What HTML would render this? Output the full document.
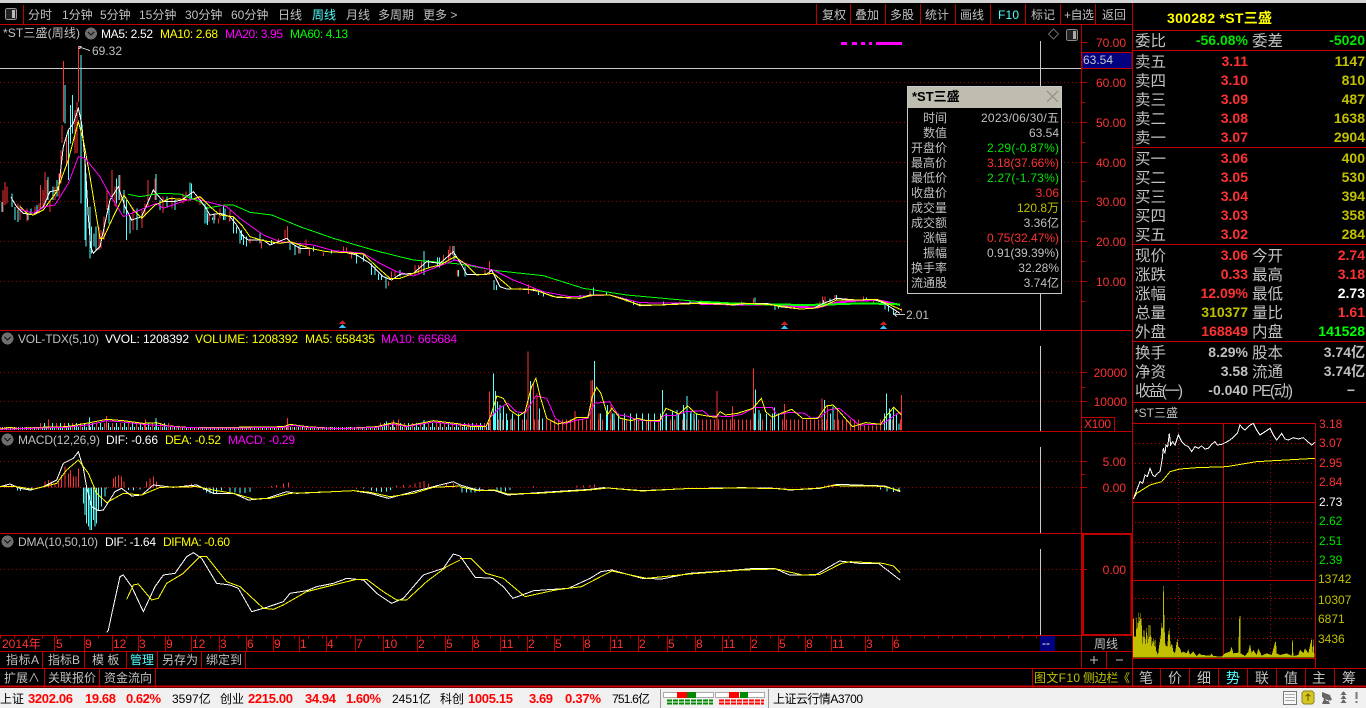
<!DOCTYPE html>
<html lang="zh">
<head>
<meta charset="utf-8">
<title>*ST三盛</title>
<style>
html,body{margin:0;padding:0;background:#000;width:1366px;height:708px;overflow:hidden}
svg{display:block;font-family:"Liberation Sans","WenQuanYi Zen Hei","Noto Sans CJK SC",sans-serif;font-size:12px;shape-rendering:crispEdges}
text{white-space:pre}
.g{fill:#c0c0c0}.w{fill:#fff}.r{fill:#ff3232}.y{fill:#ffff00}.m{fill:#ff00ff}.l{fill:#00ff00}.c{fill:#54ffff}.o{fill:#c0c000}.n{fill:#00e600}.k{fill:#000}.p{fill:#f00}
.e{text-anchor:end}.mid{text-anchor:middle}.b{font-weight:bold;font-size:14px}.s{font-size:15.5px}
.z *{vector-effect:non-scaling-stroke;fill:none}
.ln{stroke:#c00000;stroke-width:1;fill:none}
.dot{stroke:#a00000;stroke-width:1;stroke-dasharray:1 3;fill:none}
.dot2{stroke:#d00000;stroke-width:1;stroke-dasharray:1 3;fill:none}
.sb text{font-size:12px}
.sb .b2{font-weight:bold;font-size:13px;fill:#f00}
</style>
</head>
<body>
<svg width="1366" height="708" viewBox="0 0 1366 708" xmlns="http://www.w3.org/2000/svg">
<rect width="1366" height="708" fill="#000"/>
<rect width="1366" height="3" fill="#d4d4d4"/>

<!-- structural lines -->
<path class="ln" d="M0 24.5H1132M0 330.5H1132M0 431.5H1132M0 533.5H1132M0 635.5H1132M0 651.5H1132M0 668.5H1366M1081.5 25V668M1132.5 3V686M23.5 5V24M816.5 4V24M850.5 4V24M885.5 4V24M920.5 4V24M955.5 4V24M990.5 4V24M1025.5 4V24M1060.5 4V24M1095.5 4V24M1132.5 30.5H1366M1132.5 50.5H1366M1132.5 147.5H1366M1132.5 244.5H1366M1132.5 341.5H1366M1132.5 402.5H1366M1106.5 651V668M1032.5 668V686M42.5 651V668M84.5 651V668M126.5 651V668M157.5 651V668M201.5 651V668M245.5 651V668M44.5 668V686M99.5 668V686M155.5 668V686"/>
<path d="M0 686.5H1366" stroke="#d00000" stroke-width="2" fill="none"/>

<!-- toolbar -->
<rect x="5.5" y="8.5" width="11" height="11" rx="2" fill="#222" stroke="#999"/><rect x="12" y="10" width="3" height="8" fill="#bbb"/>
<g class="g">
<text x="28" y="19">分时</text><text x="62" y="19">1分钟</text><text x="100" y="19">5分钟</text><text x="139" y="19">15分钟</text><text x="185" y="19">30分钟</text><text x="231" y="19">60分钟</text><text x="278" y="19">日线</text><text x="346" y="19">月线</text><text x="378" y="19">多周期</text><text x="423" y="19">更多 &gt;</text>
<text x="822" y="19">复权</text><text x="855" y="19">叠加</text><text x="890" y="19">多股</text><text x="925" y="19">统计</text><text x="960" y="19">画线</text><text x="1031" y="19">标记</text><text x="1064" y="19" textLength="30">+自选</text><text x="1102" y="19">返回</text>
</g>
<text class="c" x="312" y="19">周线</text><text class="c" x="998" y="19" textLength="21">F10</text>

<!-- grid -->
<path class="dot" d="M0 82.5H1081M0 122.5H1081M0 162.5H1081M0 201.5H1081M0 241.5H1081M0 281.5H1081M0 372.5H1081M0 401.5H1081M0 461.5H1081M0 487.5H1081M0 569.5H1081"/>

<!-- axis ticks -->
<path class="ln" d="M1082 42.5H1087M1082 62.5H1085M1082 82.5H1087M1082 102.5H1085M1082 122.5H1087M1082 142.5H1085M1082 162.5H1087M1082 181.5H1085M1082 201.5H1087M1082 221.5H1085M1082 241.5H1087M1082 261.5H1085M1082 281.5H1087M1082 301.5H1085M1082 372.5H1087M1082 387.5H1085M1082 401.5H1087M1082 461.5H1087M1082 474.5H1085M1082 487.5H1087M1082 569.5H1087"/>
<g class="r e">
<text class="e r" x="1126" y="47">70.00</text><text class="e r" x="1126" y="87">60.00</text><text class="e r" x="1126" y="127">50.00</text><text class="e r" x="1126" y="167">40.00</text><text class="e r" x="1126" y="206">30.00</text><text class="e r" x="1126" y="246">20.00</text><text class="e r" x="1126" y="286">10.00</text>
<text class="e r" x="1127" y="377">20000</text><text class="e r" x="1127" y="406">10000</text>
<text class="e r" x="1126" y="466">5.00</text><text class="e r" x="1126" y="492">0.00</text><text class="e r" x="1126" y="574">0.00</text>
</g>
<rect x="1081.5" y="417.5" width="33" height="14" fill="#000" stroke="#c00000"/>
<text class="r" x="1084" y="428" textLength="27">X100</text>
<rect x="1083" y="534" width="48.5" height="101" fill="none" stroke="#c00000" stroke-width="2"/>

<!-- crosshair -->
<path d="M0 68.5H1081M1040.5 41V330M1040.5 346V431M1040.5 447V533M1040.5 549V635" stroke="#c8c8c8" fill="none"/>
<rect x="1082" y="52.5" width="50" height="16" fill="#000080" stroke="#c00000"/>
<text x="1083" y="64" fill="#c8c8c8" textLength="30">63.54</text>

<!-- legends -->
<text class="g" x="3" y="37" textLength="77">*ST三盛(周线)</text>
<circle cx="91" cy="33.5" r="6" fill="#6e6e6e"/><path d="M88 32l3 3 3-3" stroke="#111" stroke-width="1.3" fill="none"/>
<text class="w" x="101" y="38" textLength="52">MA5: 2.52</text><text class="y" x="160" y="38" textLength="58">MA10: 2.68</text><text class="m" x="225" y="38" textLength="58">MA20: 3.95</text><text class="l" x="290" y="38" textLength="58">MA60: 4.13</text>
<circle cx="7.5" cy="338.5" r="6" fill="#6e6e6e"/><path d="M4.5 337l3 3 3-3" stroke="#111" stroke-width="1.3" fill="none"/>
<text class="g" x="18" y="343" textLength="81">VOL-TDX(5,10)</text><text class="w" x="105" y="343" textLength="84">VVOL: 1208392</text><text class="y" x="195" y="343" textLength="103">VOLUME: 1208392</text><text class="y" x="305" y="343" textLength="70">MA5: 658435</text><text class="m" x="381" y="343" textLength="76">MA10: 665684</text>
<circle cx="7.5" cy="439.5" r="6" fill="#6e6e6e"/><path d="M4.5 438l3 3 3-3" stroke="#111" stroke-width="1.3" fill="none"/>
<text class="g" x="18" y="444" textLength="82">MACD(12,26,9)</text><text class="w" x="106" y="444" textLength="52">DIF: -0.66</text><text class="y" x="165" y="444" textLength="56">DEA: -0.52</text><text class="m" x="228" y="444" textLength="67">MACD: -0.29</text>
<circle cx="7.5" cy="541.5" r="6" fill="#6e6e6e"/><path d="M4.5 540l3 3 3-3" stroke="#111" stroke-width="1.3" fill="none"/>
<text class="g" x="18" y="546" textLength="80">DMA(10,50,10)</text><text class="w" x="105" y="546" textLength="51">DIF: -1.64</text><text class="y" x="163" y="546" textLength="67">DIFMA: -0.60</text>

<!-- top right chart decorations -->
<path d="M841 42h6v3h-6zM852 42h5v3h-5zM861 42h4v3h-4zM869 42h3v3h-3zM876 42h26v3h-26z" fill="#ff00ff"/>
<path d="M1053.5 29l5 5-5 5-5-5z" stroke="#666" fill="none"/>
<rect x="1066.5" y="29.5" width="11" height="11" rx="2" fill="#222" stroke="#888"/><rect x="1073" y="31" width="3" height="8" fill="#aaa"/>

<!-- price chart: zoom1 coords -->
<g class="z" transform="translate(0,0) scale(.33333)">
<path stroke="#ff3232" stroke-width="1" d="M15 546V615M9 570V636M21 560V610M54 610V645M60 615V660M81 625V665M105 620V645M117 610V640M122 555V624M129 570V621M135 516V615M141 540V600M150 600V636M165 560V600M177 520V590M183 450V550M186 375V429M190 183V366M200 410V500M225 330V460M235 140V306M231 306V459M297 680V750M303 690V745M312 650V720M321 570V630M336 510V591M345 560V620M360 525V600M399 621V690M426 630V684M435 610V650M444 540V621M465 535V600M489 590V639M516 590V625M549 580V610M558 575V605M600 590V615M660 625V650M690 630V665"/>
<path stroke="#54ffff" stroke-width="1" d="M6 606V636M36 580V621M45 621V660M54 630V666M84 640V660M93 625V645M111 615V640M144 531V600M159 560V600M171 540V590M195 255V370M205 390V540M212 315V430M218 285V400M243 165V610M255 480V720M258 520V740M270 620V775M275 680V760M282 700V740M288 680V750M327 610V670M349 535V610M357 525V600M372 570V640M380 600V720M390 650V700M411 625V690M468 522V600M480 600V630M501 590V620M525 600V630M570 548V600M575 550V600M621 620V670M642 640V670M670 620V660M700 650V700M725 690V720"/>
<polyline stroke="#fff" points="33,592 50,620 70,640 100,645 130,620 150,575 175,570 190,440 205,390 220,370 235,325 245,370 255,480 265,650 272,740 280,760 300,740 330,600 355,560 375,620 395,660 425,650 460,570 490,605 520,605 545,600 580,575 600,600"/>
<polyline stroke="#ffff00" points="60,620 80,640 100,645 130,630 170,575 205,480 235,365 250,420 270,530 300,715 310,715 340,650 372,585 400,630 425,655 465,615 510,595 570,600 600,590"/>
<polyline stroke="#ff00ff" points="60,628 100,640 135,620 165,615 205,550 235,470 255,475 300,530 330,585 370,650 420,630 470,610 490,625 560,600 600,597"/>
<polyline stroke="#00ff00" points="385,583 420,590 480,580 540,582 600,605"/>
<path stroke="#c8c8c8" d="M235 140L270 152M235 140H245M235 146H242"/>
</g>
<text fill="#c0c0c0" x="92" y="55" textLength="30">69.32</text>

<!-- price chart: zoom10 coords -->
<g class="z" transform="translate(200,180) scale(.33333)">
<path stroke="#ff3232" d="M27 100V125M45 105V120M55 115V130M60 85V115M88 110V125M150 175V190M185 180V205M235 175V190M255 150V180M262 138V180M295 200V220M318 178V200M328 205V228M370 218V228M430 200V215M440 203V215M455 215V235M565 305V318M575 275V295M585 275V290M645 255V285M655 255V280M665 245V280M730 225V250M745 210V245M750 198V240M758 198V225M772 270V290M855 270V285M868 243V285M985 313V342M1170 335V350M1440 365V372M960 322V332M1000 322V335M1105 350V356"/>
<path stroke="#54ffff" d="M15 70V130M22 100V135M38 112V120M75 85V120M100 125V160M110 140V160M120 155V190M130 165V195M140 170V200M180 160V190M215 180V195M270 185V210M285 195V225M300 195V220M340 200V215M395 210V220M470 220V250M490 225V245M515 250V285M525 260V285M535 280V300M545 285V300M558 290V325M600 270V290M672 213V285M685 240V265M712 232V260M718 232V262M762 198V240M775 270V290M795 260V290M882 300V330M890 315V330M1015 330V345M1030 340V350M1180 322V345M1220 335V345M1280 355V365M1300 365V375M1320 370V380M1140 345V355M1390 365V372M1470 362V370"/>
<polyline stroke="#00ff00" points="0,65 20,85 45,80 75,75 100,75 150,97 215,105 300,140 400,175 530,213 640,240 780,252 890,272 1030,287 1150,325 1280,345 1500,365" stroke-width="1"/>
<polyline stroke="#ff00ff" points="0,60 80,80 120,115 190,165 240,185 340,195 400,212 490,220 540,250 590,275 640,288 700,265 765,240 810,255 880,270 940,300 1030,335 1110,350 1230,345 1320,368 1500,370"/>
<polyline stroke="#fff" points="0,60 15,80 30,105 60,100 90,110 110,135 130,170 145,180 190,180 210,195 260,175 275,190 300,205 330,205 380,215 440,218 470,225 510,250 550,290 575,300 600,283 640,280 680,245 720,250 760,215 785,255 800,283 860,283 875,270 900,320 920,327 985,328 1020,335 1070,352 1140,355 1170,345 1230,345 1280,360 1320,377 1375,375 1500,368"/>
<polyline stroke="#ffff00" points="0,50 30,80 60,105 100,110 125,135 150,170 190,182 240,190 270,185 330,205 380,215 440,218 490,222 530,260 570,295 600,295 640,280 690,262 720,255 765,230 800,255 830,285 880,280 935,327 1000,328 1060,350 1140,355 1180,345 1230,345 1320,375 1380,375 1500,370"/>
</g>
<!-- markers -->
<path fill="#d02020" d="M342.5 320l3.5 4h-7z"/><path fill="#3cc0ff" d="M342.5 324l3.5 4h-7z"/>
<path fill="#d02020" d="M784.5 321l3.5 4h-7z"/><path fill="#3cc0ff" d="M784.5 325l3.5 4h-7z"/>
<path fill="#d02020" d="M883.5 321l3.5 4h-7z"/><path fill="#3cc0ff" d="M883.5 325l3.5 4h-7z"/>

<!-- price chart: zoom11 coords -->
<g class="z" transform="translate(700,260) scale(.33333)">
<path stroke="#ff3232" d="M30 125V133M125 125V133M160 115V130M360 125V140M368 110V135M375 110V130M405 105V118M490 110V120M520 120V130M605 145V155"/>
<path stroke="#54ffff" d="M165 113V128M225 135V150M235 135V145M370 120V135M390 115V130M410 105V118M500 112V120M545 125V135M555 135V148M565 140V155M580 145V165"/>
<polyline stroke="#ff00ff" stroke-width="2" points="0,132 100,133 230,133 290,140 350,143 410,128 470,122 530,120 565,127 600,135"/>
<polyline stroke="#00ff00" stroke-width="2" points="0,125 90,130 200,133 315,135 400,133 490,130 600,133"/>
<polyline stroke="#fff" points="0,130 50,130 100,135 140,130 200,130 240,140 300,147 340,145 370,130 410,115 470,120 520,118 550,128 600,160"/>
<polyline stroke="#ffff00" points="0,128 50,132 100,133 140,130 200,133 240,138 300,147 340,145 370,138 410,120 470,120 530,118 560,130 605,150"/>
<path stroke="#c8c8c8" d="M582 163H615M582 163L590 156M582 163L590 170"/>
</g>
<text fill="#c0c0c0" x="906" y="319" textLength="23">2.01</text>

<!-- popup -->
<rect x="907.5" y="86.5" width="154" height="207" fill="#000" stroke="#c8c8c8"/>
<rect x="908" y="87" width="153" height="21" fill="#bfbcb0"/>
<text x="912" y="101" font-weight="bold" font-size="13" fill="#000">*ST三盛</text>
<path d="M1047 91l11 11M1058 91l-11 11" stroke="#8c8c84" fill="none"/>
<g>
<text class="g e" x="947" y="122">时间</text><text class="g e" x="947" y="137">数值</text><text class="g e" x="947" y="152">开盘价</text><text class="g e" x="947" y="167">最高价</text><text class="g e" x="947" y="182">最低价</text><text class="g e" x="947" y="197">收盘价</text><text class="g e" x="947" y="212">成交量</text><text class="g e" x="947" y="227">成交额</text><text class="g e" x="947" y="242">涨幅</text><text class="g e" x="947" y="257">振幅</text><text class="g e" x="947" y="272">换手率</text><text class="g e" x="947" y="287">流通股</text>
<text class="g" x="981" y="122" textLength="78">2023/06/30/五</text><text class="g e" x="1059" y="137">63.54</text>
<text class="n" x="987" y="152" textLength="72">2.29(-0.87%)</text><text class="r" x="987" y="167" textLength="72">3.18(37.66%)</text><text class="n" x="987" y="182" textLength="72">2.27(-1.73%)</text>
<text class="r e" x="1059" y="197">3.06</text><text class="o e" x="1059" y="212">120.8万</text><text class="g e" x="1059" y="227">3.36亿</text>
<text class="r" x="987" y="242" textLength="72">0.75(32.47%)</text><text class="g" x="987" y="257" textLength="72">0.91(39.39%)</text><text class="g e" x="1059" y="272">32.28%</text><text class="g e" x="1059" y="287">3.74亿</text>
</g>

<!-- volume -->
<path stroke="#ff3232" stroke-width="3" stroke-dasharray="1 3" fill="none" d="M0 428.5H490"/>
<path stroke="#54ffff" stroke-width="3" stroke-dasharray="1 3" stroke-dashoffset="2" fill="none" d="M0 428.5H490"/>
<path stroke="#ff3232" stroke-width="7" stroke-dasharray="1 7" fill="none" d="M40 426.5H170M380 426.5H490"/>
<path stroke="#54ffff" stroke-width="7" stroke-dasharray="1 7" stroke-dashoffset="4" fill="none" d="M40 426.5H170M380 426.5H490"/>
<path stroke="#ff3232" stroke-width="11" stroke-dasharray="1 3" fill="none" d="M490 425H860M880 425H902"/>
<path stroke="#54ffff" stroke-width="17" stroke-dasharray="1 5" stroke-dashoffset="2" fill="none" d="M490 422H530M590 422H700M750 422H780M820 422H835M880 422H902"/>
<path stroke="#ff3232" stroke-width="5" stroke-dasharray="1 3" fill="none" d="M860 428H880"/>
<g class="z" transform="translate(0,330) scale(.33333)">
<path stroke="#ff3232" d="M320 258V300M145 268V300M437 268V300M862 264V300M1180 270V300M1196 268V300M1320 272V300"/>
<path stroke="#54ffff" d="M268 262V300M468 264V300M1160 275V300M1272 270V300"/>
<polyline stroke="#ffff00" points="0,297 30,292 55,296 120,292 200,290 270,278 320,268 370,272 430,280 470,278 500,287 560,292 700,292 850,290 870,283 920,290 1020,296 1130,290 1180,278 1220,288 1300,272 1380,282"/>
<polyline stroke="#ff00ff" points="0,298 60,296 120,294 200,292 270,284 320,272 370,276 430,283 500,288 560,293 700,294 850,292 880,286 920,292 1020,296 1130,292 1180,282 1220,290 1300,276 1380,286"/>
</g>
<g class="z" transform="translate(460,330) scale(.43365,.33333)">
<path stroke="#ff3232" d="M68 185V300M157 65V300M170 160V300M177 190V300M265 243V300M302 152V300M306 150V300M320 250V300M348 225V300M593 183V300M628 228V300M677 115V300M748 222V300M835 205V300M848 225V300M870 235V300M1018 195V300"/>
<path stroke="#54ffff" d="M77 130V300M82 183V300M87 215V300M92 225V300M100 230V300M110 270V300M120 265V300M135 258V300M163 153V300M183 235V300M190 265V300M310 93V300M340 225V300M355 250V300M467 180V300M475 250V300M490 245V300M500 240V300M515 225V300M523 198V300M533 245V300M540 250V300M682 178V300M690 240V300M725 232V300M840 210V300M860 230V300M983 190V300M990 235V300M1000 235V300M1012 280V300"/>
<polyline stroke="#ff00ff" points="0,283 60,288 70,262 90,235 110,220 130,245 150,250 175,198 200,205 220,265 240,282 270,270 295,265 310,220 345,215 365,255 385,258 410,270 460,275 470,257 495,257 520,245 560,242 575,258 590,258 620,260 650,253 680,232 720,232 730,255 760,247 795,250 810,265 830,262 850,240 875,235 920,285 975,282 1000,258 1018,245"/>
<polyline stroke="#ffff00" points="0,285 30,290 60,290 70,260 85,198 100,205 115,240 135,258 150,245 165,170 175,145 185,200 200,265 225,282 250,275 270,262 295,262 305,200 315,172 325,190 340,255 350,235 370,265 395,272 410,265 430,272 460,272 475,235 490,243 505,252 525,228 545,252 570,258 590,262 600,245 612,255 640,250 675,235 695,205 705,245 720,262 740,250 765,238 790,265 825,265 845,228 860,225 875,245 905,290 935,278 970,283 985,255 1000,232 1018,255"/>
</g>

<!-- macd -->
<g class="z" transform="translate(0,330) scale(.33333)">
<path stroke="#ff3232" d="M135 472V455M145 472V450M155 472V455M165 472V460M175 472V455M185 472V435M195 472V410M205 472V430M212 472V420M220 472V440M228 472V440M235 472V415M340 472V445M347 472V440M355 472V435M365 472V440M372 472V455M440 472V455M450 472V445M460 472V440M470 472V455M480 472V465M560 472V465M575 472V460M815 472V468M830 472V465M850 472V460M865 472V458M1190 472V466M1210 472V465M1230 472V465M1245 472V460M1260 472V456M1272 472V453M1285 472V460M1310 472V465M1340 472V462M1360 472V460M20 472V464M35 472V464"/>
<path stroke="#54ffff" d="M52 472V482M62 472V483M85 472V481M95 472V482M250 472V520M255 472V555M260 472V580M265 472V590M270 472V600M275 472V600M280 472V570M285 472V590M290 472V580M295 472V540M305 472V530M315 472V500M320 472V475M385 472V480M400 472V482M420 472V478M610 472V480M620 472V488M630 472V491M640 472V492M650 472V490M665 472V482M690 472V486M705 472V488M720 472V490M735 472V489M750 472V486M1070 472V476M1090 472V476M1115 472V482M1130 472V485M1145 472V486M1160 472V485M1172 472V480"/>
<path class="dot" style="stroke:#c00000" d="M0 472H1380"/>
<polyline stroke="#fff" points="0,470 30,462 60,475 90,480 130,470 170,450 190,400 220,385 235,365 250,415 260,472 275,530 295,542 310,540 345,485 365,475 395,498 425,495 460,465 520,472 590,465 640,490 700,490 745,510 800,505 860,485 890,490 1000,485 1060,482 1110,490 1165,505 1240,485 1300,470 1360,455 1380,465"/>
<polyline stroke="#ffff00" points="0,470 50,470 100,478 170,460 200,420 235,390 265,430 290,490 320,518 370,490 425,495 480,472 590,470 650,482 700,490 760,507 810,505 870,490 1000,485 1060,482 1110,487 1170,500 1240,490 1300,472 1380,468"/>
</g>
<g class="z" transform="translate(460,330) scale(.43365,.33333)">
<path stroke="#54ffff" d="M5 472V488M15 472V488M25 472V488M35 472V488M45 472V485M85 472V486M95 472V487M105 472V484M115 472V480M970 472V478M985 472V484M1000 472V486M1012 472V484"/>
<path stroke="#ff3232" d="M170 472V468M270 472V467M285 472V466M300 472V465M310 472V464M840 472V466M850 472V464M860 472V464"/>
<polyline stroke="#fff" points="0,465 40,480 80,482 110,495 180,488 300,478 330,473 420,482 520,476 650,473 730,475 760,480 830,475 870,463 980,468 1015,485"/>
<polyline stroke="#ffff00" points="0,470 40,482 80,480 110,492 180,490 300,480 340,474 420,483 520,476 660,474 730,476 770,479 830,474 860,467 975,469 1015,482"/>
</g>

<!-- dma -->
<g class="z" transform="translate(0,330) scale(.33333)">
<polyline stroke="#fff" points="320,908 325,900 340,830 360,740 370,735 395,770 430,845 465,770 490,735 525,730 560,680 580,668 605,685 650,760 690,765 715,775 755,845 800,832 850,815 870,790 920,782 950,770 1000,760 1040,745 1090,750 1130,790 1175,820 1210,805 1270,735 1330,715 1360,672 1380,678"/>
<polyline stroke="#ffff00" points="380,808 400,765 415,762 455,810 475,805 500,760 550,730 600,680 620,680 680,755 720,770 790,835 820,838 850,825 920,785 1000,765 1070,748 1100,748 1150,785 1190,810 1220,810 1280,755 1340,710 1380,690"/>
</g>
<g class="z" transform="translate(460,330) scale(.43365,.33333)">
<polyline stroke="#fff" points="0,678 35,742 75,745 100,770 122,805 170,782 250,775 300,745 325,725 350,720 420,745 465,747 530,730 620,722 680,715 725,715 760,735 820,735 850,712 875,693 920,700 965,700 1015,750"/>
<polyline stroke="#ffff00" points="0,685 25,685 60,730 100,745 150,800 220,780 280,770 350,723 430,745 530,732 650,720 730,717 790,735 830,733 880,700 900,695 975,700 1000,708 1015,728"/>
</g>

<!-- date axis -->
<path stroke="#c00000" stroke-width="3" stroke-dasharray="1 13" fill="none" d="M0 637H1040"/>
<path class="ln" d="M54.5 635V651M84.5 635V651M112.5 635V651M138.5 635V651M165.5 635V651M191.5 635V651M219.5 635V651M246.5 635V651M273.5 635V651M299.5 635V651M326.5 635V651M355.5 635V651M383.5 635V651M417.5 635V651M445.5 635V651M472.5 635V651M500.5 635V651M527.5 635V651M554.5 635V651M583.5 635V651M610.5 635V651M638.5 635V651M667.5 635V651M695.5 635V651M722.5 635V651M750.5 635V651M778.5 635V651M805.5 635V651M831.5 635V651M865.5 635V651M892.5 635V651"/>
<g class="r">
<text class="r" x="2" y="648">2014年</text><text class="r" x="56" y="648">5</text><text class="r" x="85" y="648">9</text><text class="r" x="113" y="648">12</text><text class="r" x="139" y="648">3</text><text class="r" x="166" y="648">9</text><text class="r" x="192" y="648">12</text><text class="r" x="220" y="648">3</text><text class="r" x="247" y="648">6</text><text class="r" x="274" y="648">9</text><text class="r" x="300" y="648">1</text><text class="r" x="327" y="648">4</text><text class="r" x="356" y="648">7</text><text class="r" x="384" y="648">10</text><text class="r" x="418" y="648">2</text><text class="r" x="446" y="648">5</text><text class="r" x="473" y="648">8</text><text class="r" x="501" y="648">11</text><text class="r" x="528" y="648">2</text><text class="r" x="555" y="648">5</text><text class="r" x="584" y="648">8</text><text class="r" x="611" y="648">11</text><text class="r" x="639" y="648">2</text><text class="r" x="668" y="648">5</text><text class="r" x="696" y="648">8</text><text class="r" x="723" y="648">11</text><text class="r" x="751" y="648">2</text><text class="r" x="779" y="648">5</text><text class="r" x="806" y="648">8</text><text class="r" x="832" y="648">11</text><text class="r" x="866" y="648">3</text><text class="r" x="893" y="648">6</text>
</g>
<rect x="1040" y="636" width="15" height="15" fill="#000080"/><text class="w" x="1042" y="647">--</text>
<text class="g" x="1094" y="648">周线</text>
<path d="M1090 660h8M1094 656v8M1116 660h7" stroke="#c0c0c0" fill="none"/>

<!-- lower tabs -->
<g>
<text class="g" x="6" y="664" textLength="33">指标A</text><text class="g" x="48" y="664" textLength="32">指标B</text><text class="g" x="92" y="664">模 板</text><text class="c" x="130" y="664">管理</text><text class="g" x="162" y="664">另存为</text><text class="g" x="206" y="664">绑定到</text>
<text class="g" x="4" y="682" textLength="36">扩展∧</text><text class="g" x="48" y="682">关联报价</text><text class="g" x="104" y="682">资金流向</text>
<text class="o" x="1034" y="682" textLength="46">图文F10</text><text class="o" x="1083" y="682" textLength="47">侧边栏《</text>
</g>

<!-- right panel -->
<text x="1167" y="23" font-weight="bold" font-size="14" fill="#ffff00" textLength="105">300282 *ST三盛</text>
<g class="s">
<text class="g s" x="1135" y="46">委比</text><text class="g s" x="1252" y="46">委差</text>
<text class="g s" x="1135" y="67">卖五</text><text class="g s" x="1135" y="86">卖四</text><text class="g s" x="1135" y="105">卖三</text><text class="g s" x="1135" y="124">卖二</text><text class="g s" x="1135" y="143">卖一</text>
<text class="g s" x="1135" y="164">买一</text><text class="g s" x="1135" y="183">买二</text><text class="g s" x="1135" y="202">买三</text><text class="g s" x="1135" y="221">买四</text><text class="g s" x="1135" y="240">买五</text>
<text class="g s" x="1135" y="261">现价</text><text class="g s" x="1252" y="261">今开</text><text class="g s" x="1135" y="280">涨跌</text><text class="g s" x="1252" y="280">最高</text><text class="g s" x="1135" y="299">涨幅</text><text class="g s" x="1252" y="299">最低</text><text class="g s" x="1135" y="318">总量</text><text class="g s" x="1252" y="318">量比</text><text class="g s" x="1135" y="337">外盘</text><text class="g s" x="1252" y="337">内盘</text>
<text class="g s" x="1135" y="358">换手</text><text class="g s" x="1252" y="358">股本</text><text class="g s" x="1135" y="377">净资</text><text class="g s" x="1252" y="377">流通</text><text class="g s" x="1135" y="396" textLength="48">收益(一)</text><text class="g s" x="1252" y="396" textLength="41">PE(动)</text>
</g>
<g>
<text class="n b e" x="1248" y="45">-56.08%</text><text class="n b e" x="1365" y="45">-5020</text>
<text class="r b e" x="1248" y="66">3.11</text><text class="r b e" x="1248" y="85">3.10</text><text class="r b e" x="1248" y="104">3.09</text><text class="r b e" x="1248" y="123">3.08</text><text class="r b e" x="1248" y="142">3.07</text>
<text class="r b e" x="1248" y="163">3.06</text><text class="r b e" x="1248" y="182">3.05</text><text class="r b e" x="1248" y="201">3.04</text><text class="r b e" x="1248" y="220">3.03</text><text class="r b e" x="1248" y="239">3.02</text>
<text class="o b e" x="1365" y="66">1147</text><text class="o b e" x="1365" y="85">810</text><text class="o b e" x="1365" y="104">487</text><text class="o b e" x="1365" y="123">1638</text><text class="o b e" x="1365" y="142">2904</text>
<text class="o b e" x="1365" y="163">400</text><text class="o b e" x="1365" y="182">530</text><text class="o b e" x="1365" y="201">394</text><text class="o b e" x="1365" y="220">358</text><text class="o b e" x="1365" y="239">284</text>
<text class="r b e" x="1248" y="260">3.06</text><text class="r b e" x="1365" y="260">2.74</text><text class="r b e" x="1248" y="279">0.33</text><text class="r b e" x="1365" y="279">3.18</text><text class="r b e" x="1248" y="298">12.09%</text><text class="w b e" x="1365" y="298">2.73</text><text class="o b e" x="1248" y="317">310377</text><text class="r b e" x="1365" y="317">1.61</text><text class="r b e" x="1248" y="336">168849</text><text class="l b e" x="1365" y="336">141528</text>
<text class="g b e" x="1248" y="357">8.29%</text><text class="g b e" x="1365" y="357">3.74亿</text><text class="g b e" x="1248" y="376">3.58</text><text class="g b e" x="1365" y="376">3.74亿</text><text class="g b e" x="1248" y="395">-0.040</text><text class="g b e" x="1355" y="395">−</text>
</g>
<text class="g" x="1134" y="417" textLength="44">*ST三盛</text>

<!-- intraday -->
<path d="M1132.5 423.5H1315.5M1132.5 502.5H1315.5M1132.5 580.5H1315.5M1132.5 658.5H1315.5M1223.5 423V658M1315.5 423V668" stroke="#c80000" fill="none"/>
<path class="dot2" d="M1135 443.5H1315M1135 463.5H1315M1135 482.5H1315M1135 522.5H1315M1135 542.5H1315M1135 561.5H1315M1135 598.5H1315M1135 618.5H1315M1135 638.5H1315M1178.5 424V658M1270.5 424V658"/>
<g class="z" transform="translate(1130,490) scale(.33333)">
<polygon style="fill:#c0c000" points="9,503 9,385 12,385 12,440 18,440 20,380 24,420 26,365 30,400 32,365 35,400 38,465 42,410 46,465 50,410 54,470 57,385 60,460 62,400 65,470 70,445 73,470 75,440 78,480 84,495 87,470 92,440 95,395 98,430 100,288 102,288 103,400 106,465 112,470 115,430 118,415 122,470 126,460 130,485 135,490 142,445 145,470 150,475 155,490 160,485 170,490 175,478 180,495 190,485 200,498 208,490 215,495 240,497 245,490 250,498 275,500 285,490 300,485 305,470 310,490 325,488 328,378 331,378 332,490 345,498 355,485 360,462 365,490 370,480 380,495 385,475 395,497 410,490 425,495 436,455 438,455 440,490 450,495 470,490 485,498 487,450 489,450 490,498 505,495 510,480 520,490 525,475 535,490 545,445 548,490 552,440 553,503"/>
</g>
<g class="z" transform="translate(1130,245) scale(.33333)">
<polyline stroke="#ffff00" stroke-width="1" points="10,762 20,745 60,720 95,710 120,680 150,672 200,668 290,665 380,650 555,640"/>
<polyline stroke="#fff" points="10,762 30,710 38,715 45,690 52,695 60,670 68,690 75,695 82,685 90,680 97,640 100,610 105,625 108,600 113,605 118,565 122,600 128,590 135,600 145,570 155,590 165,600 175,605 185,620 195,605 205,610 215,603 225,612 235,610 245,598 255,590 262,600 275,598 288,592 300,585 312,575 322,565 330,540 338,550 345,555 358,542 370,535 380,555 390,570 405,560 420,550 430,570 440,585 448,575 455,565 465,582 475,585 490,578 505,582 520,578 533,590 545,600 555,592"/>
</g>
<g>
<text class="r" x="1319" y="428">3.18</text><text class="r" x="1319" y="447">3.07</text><text class="r" x="1319" y="467">2.95</text><text class="r" x="1319" y="486">2.84</text><text class="w" x="1319" y="506">2.73</text><text class="n" x="1319" y="525">2.62</text><text class="n" x="1319" y="545">2.51</text><text class="n" x="1319" y="564">2.39</text>
<text class="o" x="1318" y="583">13742</text><text class="o" x="1318" y="604">10307</text><text class="o" x="1318" y="623">6871</text><text class="o" x="1318" y="643">3436</text>
</g>

<!-- right tabs -->
<path class="ln" d="M1160.5 668V686M1189.5 668V686M1218.5 668V686M1247.5 668V686M1276.5 668V686M1305.5 668V686M1334.5 668V686"/>
<g font-size="14">
<text class="g mid" x="1146" y="683" font-size="14">笔</text><text class="g mid" x="1175" y="683" font-size="14">价</text><text class="g mid" x="1204" y="683" font-size="14">细</text><text class="c mid" x="1233" y="683" font-size="14">势</text><text class="g mid" x="1262" y="683" font-size="14">联</text><text class="g mid" x="1291" y="683" font-size="14">值</text><text class="g mid" x="1319" y="683" font-size="14">主</text><text class="g mid" x="1349" y="683" font-size="14">筹</text>
</g>

<!-- status bar -->
<rect y="688" width="1366" height="20" fill="#f0f0f0"/>
<g class="sb">
<text class="k" x="0" y="703">上证</text><text class="b2" x="28" y="703" textLength="45">3202.06</text><text class="b2" x="85" y="703" textLength="31">19.68</text><text class="b2" x="126" y="703" textLength="35">0.62%</text><text class="k" x="172" y="703">3597亿</text>
<text class="k" x="220" y="703">创业</text><text class="b2" x="248" y="703" textLength="45">2215.00</text><text class="b2" x="305" y="703" textLength="31">34.94</text><text class="b2" x="346" y="703" textLength="35">1.60%</text><text class="k" x="392" y="703">2451亿</text>
<text class="k" x="440" y="703">科创</text><text class="b2" x="468" y="703" textLength="45">1005.15</text><text class="b2" x="529" y="703" textLength="24">3.69</text><text class="b2" x="565" y="703" textLength="36">0.37%</text><text class="k" x="612" y="703" textLength="38">751.6亿</text>
<text class="k" x="773" y="703" textLength="90">上证云行情A3700</text>
</g>
<path d="M660.5 689V708M768.5 689V708" stroke="#999" fill="none"/>
<rect x="663.5" y="692.5" width="50" height="5" fill="#fff" stroke="#aaa"/><rect x="677" y="692" width="10" height="6" fill="#f00"/><rect x="687" y="692" width="9" height="6" fill="#080"/>
<rect x="715.5" y="692.5" width="49" height="5" fill="#fff" stroke="#aaa"/><rect x="729" y="692" width="10" height="6" fill="#f00"/><rect x="740" y="692" width="8" height="6" fill="#080"/>
<path d="M667 700.5H713M667 703.5H713" stroke="#080" stroke-width="2" stroke-dasharray="5 1" fill="none"/>
<path d="M719 700.5H764M719 703.5H764" stroke="#f00" stroke-width="2" stroke-dasharray="5 1" fill="none"/>

<!-- tray icons -->
<rect x="1283.5" y="691.5" width="13" height="13" fill="#f8f8f8" stroke="#777"/><path d="M1285 694.5h10M1285 697.5h10M1285 700.5h10" stroke="#aaa" fill="none"/>
<rect x="1302" y="691" width="12" height="13" rx="3" fill="#d8c820" stroke="#8a8020"/><path d="M1308 694v7M1305.5 696.5l2.5-2.5 2.5 2.5" stroke="#665c00" fill="none"/>
<path d="M1322 692l8 3 2 5-5 1-5-4zM1324 699l-2 5h8l-2-4" fill="#666"/>
<path d="M1343.5 691l3 4h-6zM1343.5 695l3 4h-6zM1343.5 699l3 4h-6z" fill="#666"/>
<path d="M1356.5 692v7M1356.5 701v2" stroke="#777" stroke-width="2" fill="none"/>
</svg>
</body>
</html>
